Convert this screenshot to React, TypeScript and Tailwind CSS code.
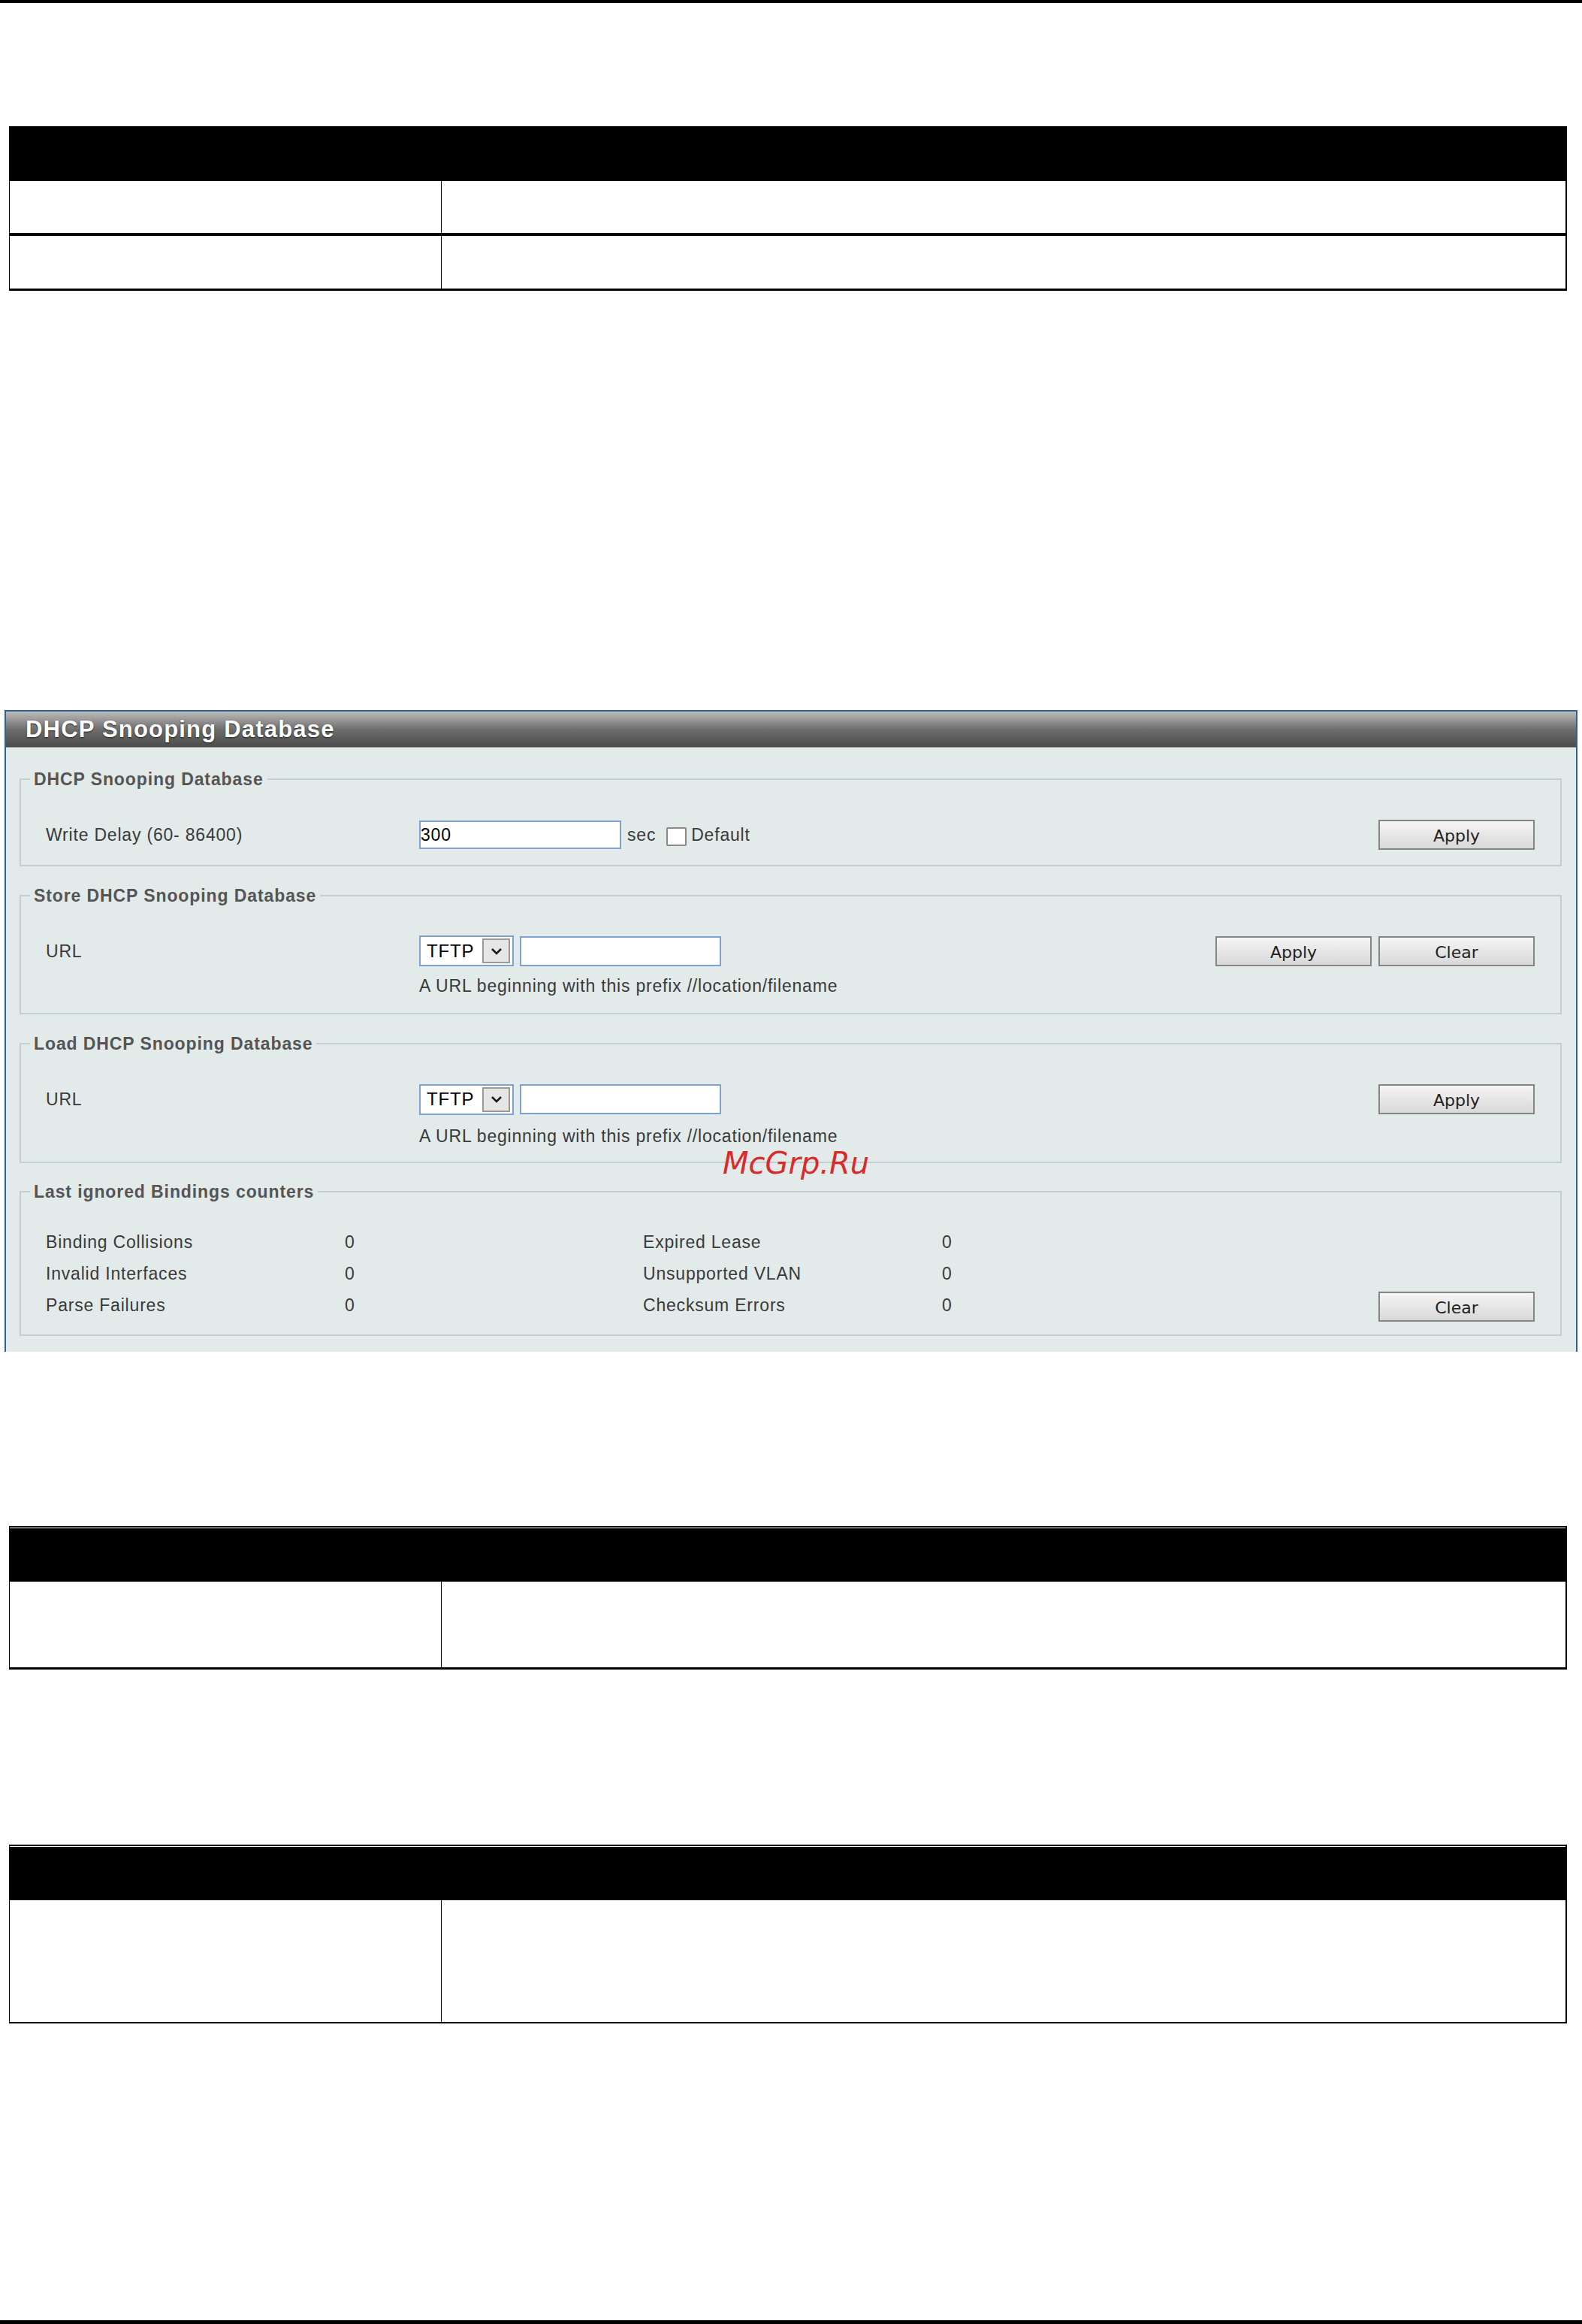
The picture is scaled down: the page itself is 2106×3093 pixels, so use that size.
import React from "react";

const btn =
  "w-[208px] h-[40px] border-2 border-[#858585] bg-linear-to-b from-[#f5f5f5] to-[#d8d8d8] text-[#222] text-[22px] font-['DejaVu_Sans',sans-serif] flex items-center justify-center pt-[3px]";

const label = "text-[23px] tracking-[0.8px] text-[#3a3a3a] leading-[28px]";

function Btn({ children }: { children: React.ReactNode }) {
  return <div className={btn}>{children}</div>;
}

function Legend({ children }: { children: React.ReactNode }) {
  return (
    <legend className="ml-[12px] px-[5px] text-[23px] leading-[28px] font-bold text-[#555] tracking-[0.9px]">
      {children}
    </legend>
  );
}

function Select() {
  return (
    <div className="w-[126px] h-[41px] border-2 border-[#7fa3cf] bg-white flex items-center justify-between pl-[8px] pr-[3px]">
      <span className="text-[24px] tracking-[0.8px] text-black">TFTP</span>
      <span className="w-[37px] h-[33px] border-2 border-[#9a9a9a] bg-[#e6e6e6] flex items-center justify-center">
        <svg width="16" height="10" viewBox="0 0 16 10">
          <path d="M2 2 L8 8 L14 2" fill="none" stroke="#1a1a1a" strokeWidth="2.6" />
        </svg>
      </span>
    </div>
  );
}

function UrlInput() {
  return <div className="ml-[8px] w-[268px] h-[40px] border-2 border-[#7fa3cf] bg-white" />;
}

export default function App() {
  return (
    <div className="relative w-[2106px] h-[3093px] bg-white overflow-hidden font-['Liberation_Sans',Arial,sans-serif]">
      {/* top rule */}
      <div className="h-[4px] bg-black" />

      {/* Table 1 */}
      <div className="mt-[164px] ml-[12px] w-[2074px] border-l border-r-2 border-black">
        <div className="h-[73px] bg-black" />
        <div className="flex h-[73px] border-b-4 border-black">
          <div className="w-[575px] border-r border-black" />
          <div className="flex-1" />
        </div>
        <div className="flex h-[73px] border-b-[3px] border-black">
          <div className="w-[575px] border-r border-black" />
          <div className="flex-1" />
        </div>
      </div>

      {/* Panel */}
      <div className="mt-[558px] ml-[6px] w-[2094px] border-t-2 border-x-2 border-[#2c6394]">
        <div className="h-[48px] bg-linear-to-b from-[#bdbdbd] via-[#6f6f6f] to-[#4b4b4b] border-b border-[#8c8c8c] flex items-center pl-[26px]">
          <span className="text-white font-bold text-[31px] tracking-[1.2px] leading-none [text-shadow:0_1px_2px_#222]">
            DHCP Snooping Database
          </span>
        </div>
        <div className="bg-[#e2eaea] pt-[28px] pb-[21px] pl-[18px] pr-[19px]">
          {/* Fieldset 1 */}
          <fieldset className="border-2 border-[#c3ced1]">
            <Legend>DHCP Snooping Database</Legend>
            <div className="pl-[33px] pr-[34px] pt-[40px] pb-[20px]">
              <div className="flex items-center h-[40px]">
                <div className={`w-[497px] ${label}`}>Write Delay (60- 86400)</div>
                <div className="w-[269px] h-[38px] border-2 border-[#7fa3cf] bg-white flex items-center">
                  <span className="text-[23px] tracking-[0.8px] text-black">300</span>
                </div>
                <span className={`ml-[8px] ${label}`}>sec</span>
                <span className="ml-[14px] mt-[4px] w-[27px] h-[25px] border-2 border-[#8a8a8a] rounded-[2px] bg-white" />
                <span className={`ml-[6px] ${label}`}>Default</span>
                <div className="ml-auto">
                  <Btn>Apply</Btn>
                </div>
              </div>
            </div>
          </fieldset>

          {/* Fieldset 2 */}
          <fieldset className="mt-[25px] border-2 border-[#c3ced1]">
            <Legend>Store DHCP Snooping Database</Legend>
            <div className="pl-[33px] pr-[34px] pt-[39px] pb-[22px]">
              <div className="flex items-center h-[41px]">
                <div className={`w-[497px] ${label}`}>URL</div>
                <Select />
                <UrlInput />
                <div className="ml-auto flex gap-[9px]">
                  <Btn>Apply</Btn>
                  <Btn>Clear</Btn>
                </div>
              </div>
              <div className={`mt-[12px] pl-[497px] ${label}`}>
                A URL beginning with this prefix //location/filename
              </div>
            </div>
          </fieldset>

          {/* Fieldset 3 */}
          <fieldset className="mt-[25px] border-2 border-[#c3ced1]">
            <Legend>Load DHCP Snooping Database</Legend>
            <div className="pl-[33px] pr-[34px] pt-[40px] pb-[20px]">
              <div className="flex items-center h-[40px]">
                <div className={`w-[497px] ${label}`}>URL</div>
                <Select />
                <UrlInput />
                <div className="ml-auto">
                  <Btn>Apply</Btn>
                </div>
              </div>
              <div className={`mt-[15px] pl-[497px] ${label}`}>
                A URL beginning with this prefix //location/filename
              </div>
            </div>
          </fieldset>

          {/* Fieldset 4 */}
          <fieldset className="mt-[24px] border-2 border-[#c3ced1]">
            <Legend>Last ignored Bindings counters</Legend>
            <div className="pl-[33px] pr-[34px] pt-[32px] pb-[18px]">
              {[
                ["Binding Collisions", "0", "Expired Lease", "0"],
                ["Invalid Interfaces", "0", "Unsupported VLAN", "0"],
                ["Parse Failures", "0", "Checksum Errors", "0"],
              ].map((r, i) => (
                <div key={i} className="flex items-center h-[42px]">
                  <div className={`w-[398px] ${label}`}>{r[0]}</div>
                  <div className={`w-[397px] ${label}`}>{r[1]}</div>
                  <div className={`w-[398px] ${label}`}>{r[2]}</div>
                  <div className={`${label}`}>{r[3]}</div>
                  {i === 2 && (
                    <div className="ml-auto mt-[3px]">
                      <Btn>Clear</Btn>
                    </div>
                  )}
                </div>
              ))}
            </div>
          </fieldset>
        </div>
      </div>

      {/* Table 2 */}
      <div className="mt-[232px] ml-[12px] w-[2074px] border-l border-r-2 border-black border-t-2">
        <div className="h-[72px] bg-black border-t border-white" />
        <div className="flex h-[117px] border-b-[3px] border-black">
          <div className="w-[575px] border-r border-black" />
          <div className="flex-1" />
        </div>
      </div>

      {/* Table 3 */}
      <div className="mt-[233px] ml-[12px] w-[2074px] border-l border-r-2 border-black border-t-2">
        <div className="h-[72px] bg-black border-t border-white" />
        <div className="flex h-[164px] border-b-2 border-black">
          <div className="w-[575px] border-r border-black" />
          <div className="flex-1" />
        </div>
      </div>

      {/* bottom rule */}
      <div className="absolute left-0 bottom-0 w-full h-[5px] bg-black" />

      {/* watermark */}
      <div className="absolute left-[962px] top-[1528px] font-['DejaVu_Sans',sans-serif] italic text-[40px] leading-none text-[#d92b2b]">
        McGrp.Ru
      </div>
    </div>
  );
}
